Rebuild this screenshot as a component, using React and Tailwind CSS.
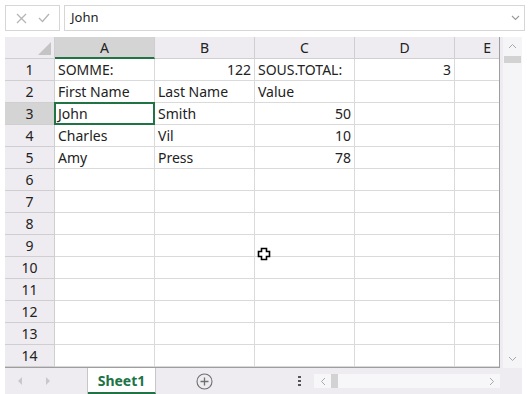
import React from "react";

const cols = ["A", "B", "C", "D", "E"];
const data = {
  1: [{ t: "SOMME:" }, { t: "122", r: true }, { t: "SOUS.TOTAL:" }, { t: "3", r: true }, {}],
  2: [{ t: "First Name" }, { t: "Last Name" }, { t: "Value" }, {}, {}],
  3: [{ t: "John" }, { t: "Smith" }, { t: "50", r: true }, {}, {}],
  4: [{ t: "Charles" }, { t: "Vil" }, { t: "10", r: true }, {}, {}],
  5: [{ t: "Amy" }, { t: "Press" }, { t: "78", r: true }, {}, {}],
};
const widths = ["w-[100px]", "w-[100px]", "w-[100px]", "w-[100px]", "w-[45px]"];

export default function App() {
  const rows = Array.from({ length: 14 }, (_, i) => i + 1);
  return (
    <div className="w-[530px] h-[394px] bg-white text-[#222] relative overflow-hidden" style={{ fontFamily: '"Noto Sans", "Open Sans", sans-serif' }}>
      {/* formula bar */}
      <div className="flex gap-[4px] px-[5px] pt-[5px] h-[31px]">
        <div className="w-[55px] h-[26px] border border-[#d6d6d6] flex items-center justify-around px-[4px] text-[#b8b8b8]">
          <svg width="11" height="11" viewBox="0 0 11 11"><path d="M1 1L10 10M10 1L1 10" stroke="#b5b5b5" strokeWidth="1.3" /></svg>
          <svg width="12" height="10" viewBox="0 0 12 10"><path d="M1 5L4.5 8.5L11 1" stroke="#b5b5b5" strokeWidth="1.3" fill="none" /></svg>
        </div>
        <div className="flex-1 h-[26px] border border-[#d6d6d6] flex items-center justify-between pl-[6px] pr-[4px] text-[13px]">
          <span>John</span>
          <svg width="9" height="6" viewBox="0 0 9 6"><path d="M1 1L4.5 4.5L8 1" stroke="#9a9a9a" strokeWidth="1.1" fill="none" /></svg>
        </div>
      </div>
      {/* sheet frame */}
      <div className="mt-[6px] ml-[5px] w-[517px] h-[357px] bg-[#eeecf0] flex flex-col">
        <div className="flex h-[331px]">
          <div className="w-[495px] h-[331px] bg-white border-r border-b border-[#9e9e9e] overflow-hidden text-[14px]">
            {/* header */}
            <div className="flex h-[22px] bg-[#eeecf0]">
              <div className="w-[50px] shrink-0 border-r border-b border-[#cfcfcf] relative">
                <svg className="absolute right-[3px] bottom-[3px]" width="13" height="13" viewBox="0 0 13 13"><path d="M13 0L13 13L0 13Z" fill="#c4c4c4" /></svg>
              </div>
              {cols.map((c, i) => (
                <div key={c} className={`${widths[i]} shrink-0 flex items-center ${c === "E" ? "justify-end pr-[8px]" : "justify-center"} border-r border-b ${c === "A" ? "bg-[#d4d4d4] border-b-2 border-b-[#217346] border-r-[#cfcfcf]" : "border-[#cfcfcf]"}`}>
                  {c}
                </div>
              ))}
            </div>
            {rows.map((r) => (
              <div key={r} className="flex h-[22px]">
                <div className={`w-[50px] shrink-0 flex items-center justify-center border-r border-b border-[#cfcfcf] ${r === 3 ? "bg-[#d4d4d4]" : "bg-[#eeecf0]"}`}>{r}</div>
                {cols.map((c, i) => {
                  const cell = (data[r] || [])[i] || {};
                  const sel = r === 3 && c === "A";
                  return (
                    <div key={c} className={`${widths[i]} shrink-0 flex items-center border-r border-b border-[#dadada] relative ${cell.r ? "justify-end pr-[3px]" : "pl-[3px]"}`}>
                      {sel && <div className="absolute left-[-1px] top-[-1px] right-[-1px] bottom-[-1px] border-2 border-[#217346]" />}
                      <span className="whitespace-nowrap relative">{cell.t}</span>
                    </div>
                  );
                })}
              </div>
            ))}
          </div>
          {/* vertical scrollbar */}
          <div className="ml-[3px] w-[19px] h-[331px] bg-[#f5f4f6] flex flex-col items-center">
            <svg className="mt-[6px]" width="9" height="6" viewBox="0 0 9 6"><path d="M1 5L4.5 1.5L8 5" stroke="#a8a8a8" strokeWidth="1" fill="none" /></svg>
            <div className="mt-[7px] w-[17px] h-[7px] bg-[#d2d2d2]" />
            <div className="flex-1" />
            <svg className="mb-[6px]" width="9" height="6" viewBox="0 0 9 6"><path d="M1 1L4.5 4.5L8 1" stroke="#a8a8a8" strokeWidth="1" fill="none" /></svg>
          </div>
        </div>
        {/* bottom bar */}
        <div className="flex h-[26px] items-stretch">
          <div className="w-[83px] flex items-center pl-[13px] gap-[22px] border-r border-[#c6c6c6]">
            <svg width="5" height="8" viewBox="0 0 5 8"><path d="M4 0L0 4L4 8Z" fill="#c8c8c8" /></svg>
            <svg width="5" height="8" viewBox="0 0 5 8"><path d="M1 0L5 4L1 8Z" fill="#c8c8c8" /></svg>
          </div>
          <div className="w-[68px] bg-white border-r border-[#c6c6c6] border-b-2 border-b-[#217346] flex items-center justify-center text-[14px] font-bold text-[#217346]">
            Sheet1
          </div>
          <div className="w-[97px] flex items-center justify-center">
            <svg width="17" height="17" viewBox="0 0 17 17"><circle cx="8.5" cy="8.5" r="7.5" stroke="#6f6f6f" strokeWidth="1.1" fill="none" /><path d="M8.5 4.5V12.5M4.5 8.5H12.5" stroke="#6f6f6f" strokeWidth="1.3" /></svg>
          </div>
          <div className="w-[61px] flex items-center justify-end pr-[13px]">
            <svg width="3" height="10" viewBox="0 0 3 10"><rect x="0" y="0" width="3" height="2" fill="#555" /><rect x="0" y="4" width="3" height="2" fill="#555" /><rect x="0" y="8" width="3" height="2" fill="#555" /></svg>
          </div>
          <div className="w-[186px] my-[6px] bg-[#f7f6f8] flex items-center pl-[6px] pr-[5px]">
            <svg width="6" height="9" viewBox="0 0 6 9"><path d="M5 1L1.5 4.5L5 8" stroke="#a8a8a8" strokeWidth="1" fill="none" /></svg>
            <div className="ml-[5px] w-[7px] h-full bg-[#d2d2d2]" />
            <div className="flex-1" />
            <svg width="6" height="9" viewBox="0 0 6 9"><path d="M1 1L4.5 4.5L1 8" stroke="#a8a8a8" strokeWidth="1" fill="none" /></svg>
          </div>
        </div>
      </div>
      {/* cursor */}
      <svg className="absolute left-[257px] top-[247px]" width="14" height="14" viewBox="0 0 14 14">
        <path d="M4.5 1.5H9.5V4.5H12.5V9.5H9.5V12.5H4.5V9.5H1.5V4.5H4.5Z" fill="white" stroke="black" strokeWidth="1.6" />
      </svg>
    </div>
  );
}
